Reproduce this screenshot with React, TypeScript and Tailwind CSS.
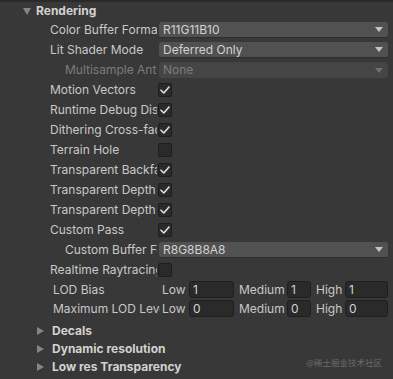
import React from "react";

const font = { fontFamily: "Inter, 'Noto Sans', sans-serif" };

function Arrow({ disabled }: { disabled?: boolean }) {
  return (
    <svg width="8" height="5" viewBox="0 0 8 5" className="shrink-0">
      <path d="M0 0 L8 0 L4 5 Z" fill={disabled ? "#6f6f6f" : "#c4c4c4"} />
    </svg>
  );
}

function Check() {
  return (
    <div className="w-[14px] h-[14px] rounded-[2px] bg-[#2a2a2a] border border-[#1e1e1e] flex items-center justify-center">
      <svg width="10" height="8" viewBox="0 0 10 8">
        <path d="M1 4.2 L3.8 7 L9 1" stroke="#e0e0e0" strokeWidth="1.6" fill="none" strokeLinecap="round" strokeLinejoin="round" />
      </svg>
    </div>
  );
}

function Empty() {
  return <div className="w-[14px] h-[14px] rounded-[2px] bg-[#2a2a2a] border border-[#1e1e1e]" />;
}

function Label({ text, indent, disabled }: { text: string; indent?: boolean; disabled?: boolean }) {
  return (
    <div
      className={`${indent ? "pl-[65px] w-[157px]" : "pl-[50px] w-[157px]"} shrink-0 overflow-hidden whitespace-nowrap ${
        disabled ? "text-[#7c7c7c]" : "text-[#c8c8c8]"
      }`}
    >
      {text}
    </div>
  );
}

function Dropdown({ value, disabled }: { value: string; disabled?: boolean }) {
  return (
    <div
      className={`ml-[2px] w-[229px] h-[16px] rounded-[3px] flex items-center justify-between pl-[4px] pr-[5px] ${
        disabled
          ? "bg-[#454545] text-[#7c7c7c]"
          : "bg-[#515151] border-b border-[#2e2e2e] text-[#d2d2d2]"
      }`}
    >
      <span className="leading-none">{value}</span>
      <Arrow disabled={disabled} />
    </div>
  );
}

function Row({ children }: { children: React.ReactNode }) {
  return <div className="h-[20px] flex items-center">{children}</div>;
}

function CheckRow({ text, checked, indent }: { text: string; checked: boolean; indent?: boolean }) {
  return (
    <Row>
      <Label text={text} indent={indent} />
      <div className="ml-[1px]">{checked ? <Check /> : <Empty />}</div>
    </Row>
  );
}

function NumField({ value, w }: { value: string; w: string }) {
  return (
    <div className={`${w} h-[17px] rounded-[3px] bg-[#2a2a2a] border border-[#1f1f1f] flex items-center pl-[3px] text-[#d2d2d2] leading-none`}>
      {value}
    </div>
  );
}

function LodRow({ label, v }: { label: string; v: string }) {
  return (
    <div className="h-[19px] flex items-center text-[#c8c8c8]">
      <div className="pl-[53px] w-[160px] shrink-0 overflow-hidden whitespace-nowrap">{label}</div>
      <span className="ml-[2px] w-[27px]">Low</span>
      <NumField value={v} w="w-[45px]" />
      <span className="ml-[5px] w-[48px]">Medium</span>
      <NumField value={v} w="w-[24px]" />
      <span className="ml-[5px] w-[29px]">High</span>
      <NumField value={v} w="w-[43px]" />
    </div>
  );
}

function Foldout({ text }: { text: string }) {
  return (
    <div className="h-[18px] flex items-center">
      <svg width="7" height="8" viewBox="0 0 7 8" className="ml-[37px]">
        <path d="M0 0 L7 4 L0 8 Z" fill="#858585" />
      </svg>
      <span className="ml-[8px] font-bold text-[#d2d2d2]">{text}</span>
    </div>
  );
}

export default function App() {
  return (
    <div
      className="w-[393px] h-[379px] bg-[#383838] border-t-2 border-[#2a2a2a] text-[12px] relative overflow-hidden"
      style={font}
    >
      <div className="h-[18px] flex items-center">
        <svg width="8" height="7" viewBox="0 0 8 7" className="ml-[23px]">
          <path d="M0 0 L8 0 L4 7 Z" fill="#858585" />
        </svg>
        <span className="ml-[5px] font-bold text-[#d2d2d2]">Rendering</span>
      </div>
      <Row>
        <Label text="Color Buffer Format" />
        <Dropdown value="R11G11B10" />
      </Row>
      <Row>
        <Label text="Lit Shader Mode" />
        <Dropdown value="Deferred Only" />
      </Row>
      <Row>
        <Label text="Multisample Anti-aliasing Quality" indent disabled />
        <Dropdown value="None" disabled />
      </Row>
      <CheckRow text="Motion Vectors" checked />
      <CheckRow text="Runtime Debug Display" checked />
      <CheckRow text="Dithering Cross-fade" checked />
      <CheckRow text="Terrain Hole" checked={false} />
      <CheckRow text="Transparent Backface" checked />
      <CheckRow text="Transparent Depth Prepass" checked />
      <CheckRow text="Transparent Depth Postpass" checked />
      <CheckRow text="Custom Pass" checked />
      <Row>
        <Label text="Custom Buffer Format" indent />
        <Dropdown value="R8G8B8A8" />
      </Row>
      <CheckRow text="Realtime Raytracing" checked={false} />
      <LodRow label="LOD Bias" v="1" />
      <LodRow label="Maximum LOD Level" v="0" />
      <div className="h-[4px]" />
      <Foldout text="Decals" />
      <Foldout text="Dynamic resolution" />
      <Foldout text="Low res Transparency" />
      <div
        className="absolute right-[11px] bottom-[10px] text-[8.5px] text-[#6c6c6c]"
        style={{ fontFamily: "'Noto Sans CJK SC', sans-serif" }}
      >
        @稀土掘金技术社区
      </div>
    </div>
  );
}
